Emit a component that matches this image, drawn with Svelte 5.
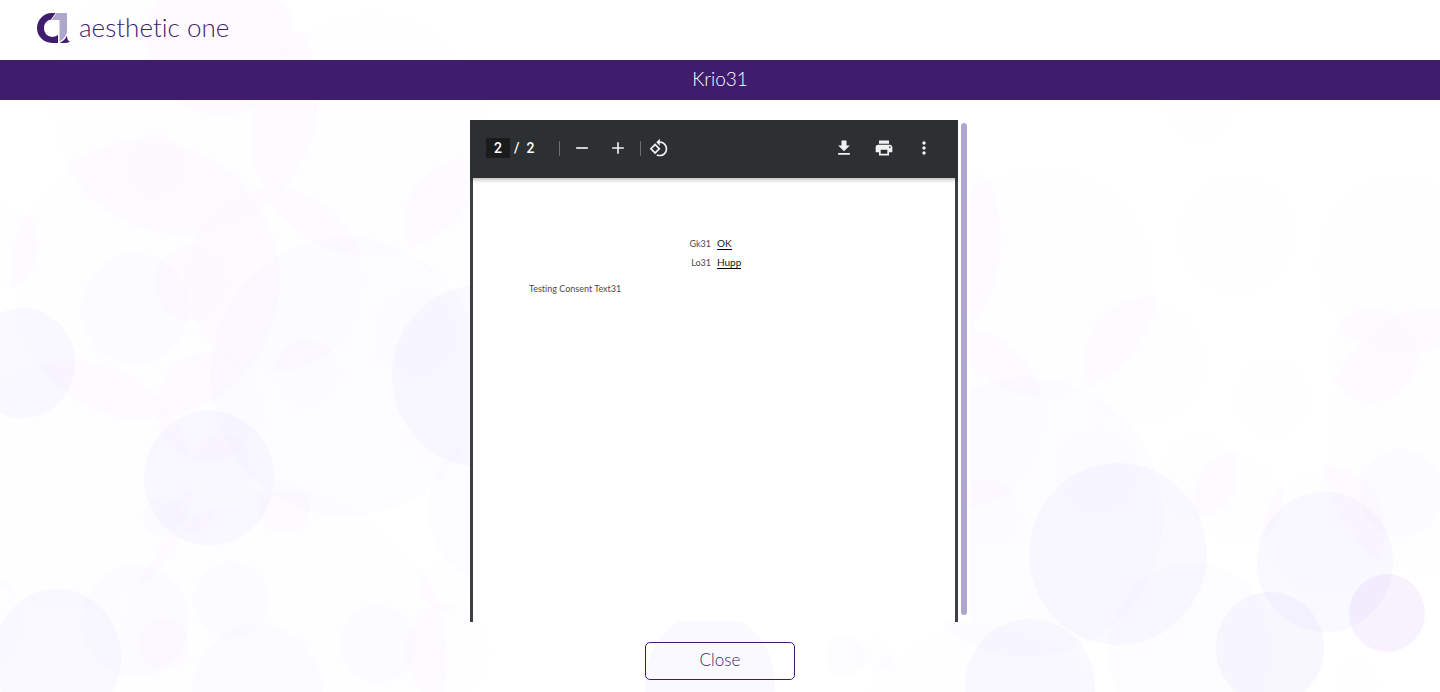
<script>
  // Background bubbles: [cx, cy, rx, ry, tone]
  const bubbles = [
    [183, 96, 136, 139, 0], [220, 40, 75, 75, 0], [145, 280, 135, 140, 0], [155, 167, 32, 33, 0],
    [370, 133, 120, 124, 0], [274, 280, 90, 92, 0], [135, 309, 54, 56, 1], [193, 283, 38, 39, 0],
    [346, 377, 136, 140, 1], [467, 222, 63, 64, 0], [480, 376, 88, 91, 2], [417, 333, 43, 45, 0],
    [22, 363, 53, 55, 2], [-3, 245, 42, 46, 0], [307, 373, 33, 34, 0], [209, 407, 54, 55, 0],
    [209, 478, 65, 67, 2], [222, 466, 32, 33, 0], [163, 517, 20, 20, 1], [194, 512, 20, 20, 0],
    [284, 507, 26, 27, 0], [70, 484, 123, 124, 0], [283, 660, 164, 169, 0], [135, 621, 54, 56, 1],
    [163, 644, 26, 27, 0], [57, 658, 64, 69, 2], [-20, 618, 43, 48, 0], [231, 600, 38, 39, 1],
    [257, 692, 65, 69, 1], [378, 644, 38, 39, 1], [443, 584, 25, 27, 0], [500, 510, 72, 75, 1],
    [450, 652, 45, 50, 0], [710, 683, 65, 70, 2], [845, 656, 20, 20, 1], [875, 652, 20, 20, 0],
    [1045, 280, 113, 117, 0], [920, 240, 81, 110, 0], [1200, 103, 39, 42, 0], [1237, 234, 63, 64, 0],
    [1402, 263, 89, 92, 0], [1147, 362, 63, 65, 0], [1372, 355, 46, 47, 0], [1440, 443, 118, 137, 0],
    [1272, 398, 42, 44, 0], [960, 418, 85, 90, 0], [1027, 517, 136, 140, 1], [1118, 554, 89, 91, 2],
    [1098, 472, 43, 44, 0], [985, 513, 35, 34, 0], [1197, 474, 41, 44, 0], [1238, 500, 45, 47, 0],
    [1192, 652, 83, 90, 1], [1030, 686, 65, 67, 2], [1270, 648, 54, 56, 3], [1325, 562, 68, 70, 2],
    [1325, 529, 61, 64, 0], [1387, 613, 38, 39, 4], [1401, 493, 42, 44, 1], [1357, 682, 26, 28, 0],
    [980, 740, 130, 115, 0]
  ];
</script>

<div class="page">
  <svg class="bubbles" viewBox="0 0 1440 692" preserveAspectRatio="none" aria-hidden="true">
    {#each bubbles as [cx, cy, rx, ry, tone]}
      <ellipse class="tone{tone}" {cx} {cy} {rx} {ry} />
    {/each}
  </svg>

  <header class="brand">
    <svg class="mark" viewBox="0 0 34 32" aria-hidden="true">
      <path fill="#3e1d6d" d="M19.500 1H16A15 15 0 0 0 16 31H22V23Q19 25 16 25A8.500 8.500 0 0 1 8 16Q8 9 15 7.500Z" />
      <path fill="#aea6cc" d="M20.500 1H31V20Q30 26 23.500 29.500V8H15.500Z" />
      <path fill="#3e1d6d" d="M23.500 31Q29 28.500 31 23.500Q31 29 34 29.500Q31.500 31.500 23.500 31Z" />
    </svg>
    <span class="name">aesthetic one</span>
  </header>

  <h1 class="title">Krio31</h1>

  <main class="content">
    <div class="scroller">
      <section class="viewer">
        <div class="toolbar">
          <input class="pageno" value="2" aria-label="Page number" />
          <span class="total">/&nbsp; 2</span>
          <i class="rule"></i>
          <button class="tool" aria-label="Zoom out"><svg viewBox="0 0 24 24"><path d="M19 13H5v-2h14v2z" /></svg></button>
          <button class="tool" aria-label="Zoom in"><svg viewBox="0 0 24 24"><path d="M19 13h-6v6h-2v-6H5v-2h6V5h2v6h6v2z" /></svg></button>
          <i class="rule"></i>
          <button class="tool" aria-label="Rotate"><svg viewBox="0 0 24 24"><path d="M7.34 6.41L.86 12.9l6.49 6.48 6.49-6.48-6.5-6.49zM3.69 12.9l3.66-3.66L11 12.9l-3.66 3.66-3.65-3.66zm15.67-6.26A8.95 8.95 0 0 0 13 4V.76L8.76 5 13 9.24V6c1.79 0 3.58.68 4.95 2.05a7.007 7.007 0 0 1 0 9.9 6.973 6.973 0 0 1-7.79 1.44l-1.49 1.49C10.02 21.62 11.51 22 13 22c2.3 0 4.61-.88 6.36-2.64a8.98 8.98 0 0 0 0-12.72z" /></svg></button>
          <span class="grow"></span>
          <button class="tool wide" aria-label="Download"><svg viewBox="0 0 24 24"><path d="M19 9h-4V3H9v6H5l7 7 7-7zM5 18v2h14v-2H5z" /></svg></button>
          <button class="tool wide" aria-label="Print"><svg viewBox="0 0 24 24"><path d="M19 8H5c-1.66 0-3 1.34-3 3v6h4v4h12v-4h4v-6c0-1.66-1.34-3-3-3zm-3 11H8v-5h8v5zm3-7c-.55 0-1-.45-1-1s.45-1 1-1 1 .45 1 1-.45 1-1 1zm-1-9H6v4h12V3z" /></svg></button>
          <button class="tool wide" aria-label="More actions"><svg viewBox="0 0 24 24"><path d="M12 8c1.1 0 2-.9 2-2s-.9-2-2-2-2 .9-2 2 .9 2 2 2zm0 2c-1.1 0-2 .9-2 2s.9 2 2 2 2-.9 2-2-.9-2-2-2zm0 6c-1.1 0-2 .9-2 2s.9 2 2 2 2-.9 2-2-.9-2-2-2z" /></svg></button>
        </div>
        <article class="sheet">
          <dl class="fields">
            <dt>Gk31</dt><dd>OK</dd>
            <dt>Lo31</dt><dd>Hupp</dd>
          </dl>
          <p class="consent">Testing Consent Text31</p>
        </article>
      </section>
      <div class="track"><div class="thumb"></div></div>
    </div>
  </main>

  <footer class="actions">
    <button class="close">Close</button>
  </footer>
</div>

<style>
  :global(body) { margin: 0; background: #fff; }
  .page {
    position: relative;
    isolation: isolate;
    display: flex;
    flex-direction: column;
    height: 100vh;
    overflow: hidden;
    font-family: Lato, sans-serif;
    font-variant-ligatures: none;
    color: #3e1d6d;
  }
  .bubbles { position: absolute; inset: 0; z-index: -1; width: 100%; height: 100%; }
  .tone0 { fill: rgba(120, 60, 240, 0.006); }
  .tone1 { fill: rgba(120, 60, 240, 0.012); }
  .tone2 { fill: rgba(100, 50, 240, 0.03); }
  .tone3 { fill: rgba(110, 50, 230, 0.04); }
  .tone4 { fill: rgba(140, 40, 230, 0.06); }

  .brand { display: flex; align-items: center; gap: 9px; height: 60px; padding: 0 36px; box-sizing: border-box; }
  .mark { width: 34px; height: 32px; margin-bottom: 4px; }
  .name { font-size: 26px; font-weight: 300; line-height: 32px; margin-bottom: 6px; }

  .title {
    margin: 0;
    height: 40px;
    line-height: 38px;
    background: #3e1d6d;
    color: #fff;
    text-align: center;
    font-size: 19px;
    font-weight: 300;
  }

  .content { flex: 1; min-height: 0; display: flex; justify-content: center; padding-top: 20px; }
  .scroller { display: flex; width: 500px; max-width: 100%; background: #fff; }
  .viewer { flex: 1; display: flex; flex-direction: column; overflow: hidden; background: #3c4043; }

  .toolbar {
    display: flex;
    align-items: center;
    height: 58px;
    padding: 0 16px 2px;
    box-sizing: border-box;
    background: #2d3033;
    color: #fff;
    z-index: 1;
    box-shadow: 0 1px 5px rgba(0, 0, 0, 0.35);
    font: 500 14px/20px Roboto, sans-serif;
  }
  .pageno {
    width: 24px;
    height: 20px;
    padding: 0;
    border: 0;
    background: #191b1c;
    color: #fff;
    font: inherit;
    text-align: center;
  }
  .total { width: 45px; padding-left: 4px; white-space: pre; }
  .rule { width: 1px; height: 15px; background: #6c6e70; }
  .tool { display: grid; place-items: center; width: 36px; height: 36px; padding: 0; border: 0; background: none; }
  .rule + .tool { margin-left: 4px; }
  .tool + .rule { margin-left: 4px; }
  .rule + .tool:has(+ .grow) { margin-left: 0; }
  .tool svg { width: 20px; height: 20px; fill: #f1f1f1; }
  .tool.wide { margin-left: 4px; }
  .grow { flex: 1; }

  .sheet { flex: 1; margin: 0 3px; padding: 57px 56px; background: #fff; color: #4a4a4a; font-size: 9px; }
  .fields {
    display: grid;
    grid-template-columns: 182px auto;
    justify-content: start;
    justify-items: start;
    column-gap: 6px;
    row-gap: 4px;
    margin: 0;
    line-height: 12px;
  }
  dt { justify-self: end; margin-top: 3px; }
  dd { margin: 3px 0 0; border-bottom: 1px solid #000; color: #101820; font-size: 10px; line-height: 11px; }
  .consent { margin: 14px 0 0; line-height: 12px; }

  .track { width: 12px; padding: 3px 3px 7px; box-sizing: border-box; display: flex; }
  .thumb { flex: 1; border-radius: 3px; background: #aea6cc; }

  .actions { display: flex; justify-content: center; padding: 20px 0 12px; }
  .close {
    width: 150px;
    height: 38px;
    padding: 0 0 2px;
    border: 1px solid #3e1d6d;
    border-radius: 5px;
    background: transparent;
    color: #3e1d6d;
    font: 300 17px/20px Lato, sans-serif;
  }
</style>
